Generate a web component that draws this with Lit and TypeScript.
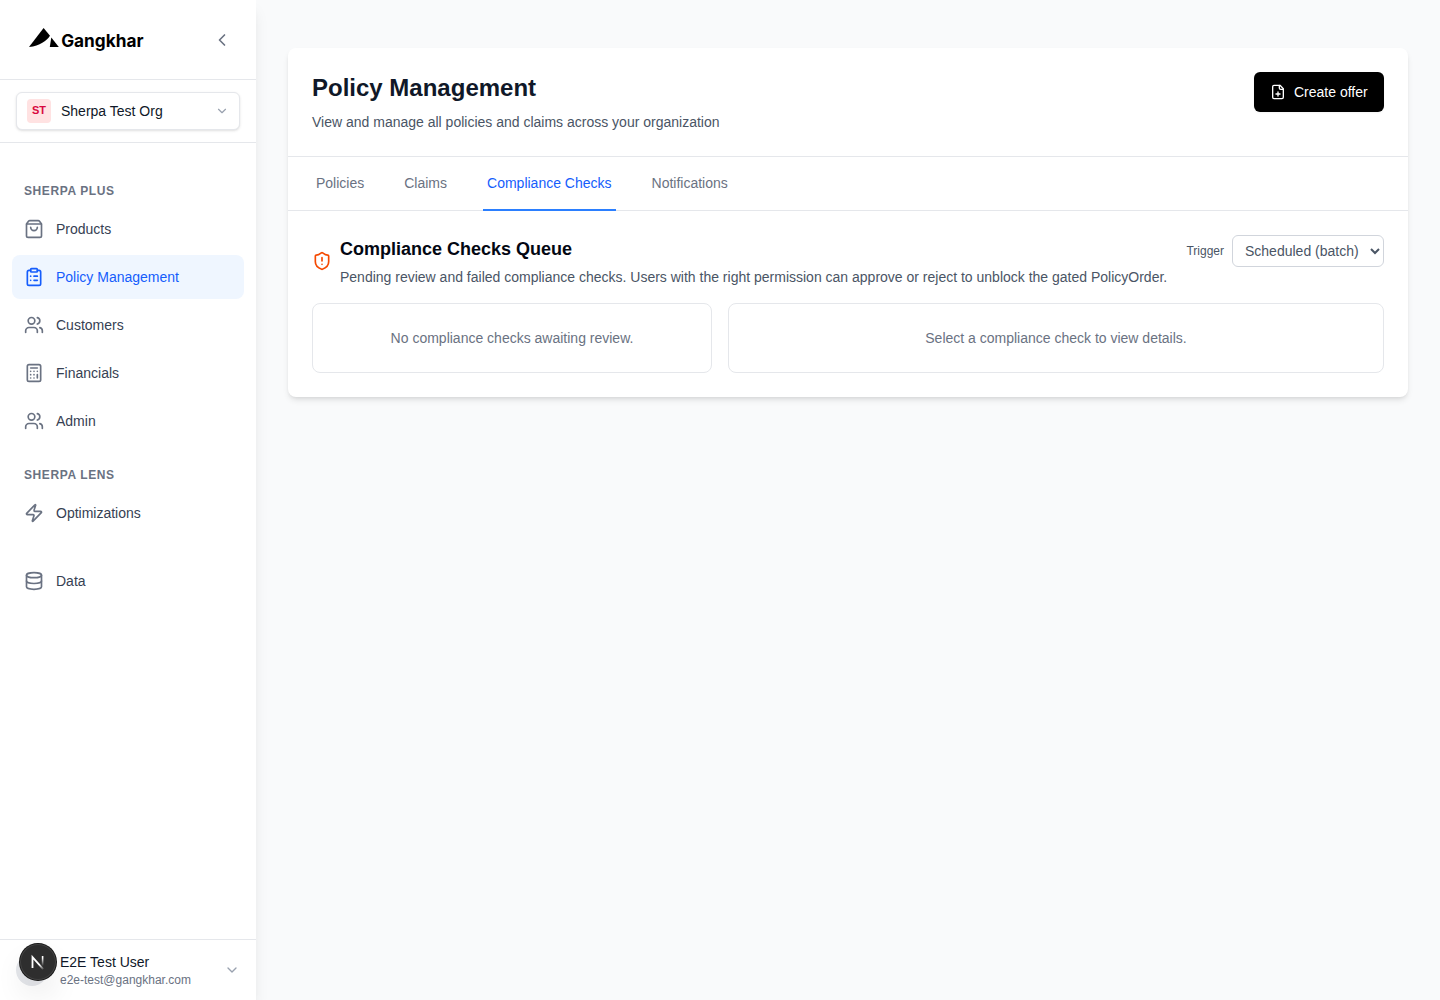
import { LitElement, html, css, svg } from "lit";
import { customElement } from "lit/decorators.js";
import { classMap } from "lit/directives/class-map.js";

const glyphs: Record<string, unknown> = {
  bag: svg`<path d="M16 10a4 4 0 0 1-8 0"/><path d="M3.103 6.034h17.794"/><path d="M3.4 5.467a2 2 0 0 0-.4 1.2V20a2 2 0 0 0 2 2h14a2 2 0 0 0 2-2V6.667a2 2 0 0 0-.4-1.2l-2-2.667A2 2 0 0 0 17 2H7a2 2 0 0 0-1.6.8z"/>`,
  clipboard: svg`<rect width="8" height="4" x="8" y="2" rx="1" ry="1"/><path d="M16 4h2a2 2 0 0 1 2 2v14a2 2 0 0 1-2 2H6a2 2 0 0 1-2-2V6a2 2 0 0 1 2-2h2"/><path d="M12 11h4"/><path d="M12 16h4"/><path d="M8 11h.01"/><path d="M8 16h.01"/>`,
  users: svg`<path d="M16 21v-2a4 4 0 0 0-4-4H6a4 4 0 0 0-4 4v2"/><path d="M16 3.128a4 4 0 0 1 0 7.744"/><path d="M22 21v-2a4 4 0 0 0-3-3.87"/><circle cx="9" cy="7" r="4"/>`,
  calculator: svg`<rect width="16" height="20" x="4" y="2" rx="2"/><path d="M8 6h8"/><path d="M16 14v4"/><path d="M16 10h.01"/><path d="M12 10h.01"/><path d="M8 10h.01"/><path d="M12 14h.01"/><path d="M8 14h.01"/><path d="M12 18h.01"/><path d="M8 18h.01"/>`,
  zap: svg`<path d="M4 14a1 1 0 0 1-.78-1.63l9.9-10.2a.5.5 0 0 1 .86.46l-1.92 6.02A1 1 0 0 0 13 10h7a1 1 0 0 1 .78 1.63l-9.9 10.2a.5.5 0 0 1-.86-.46l1.92-6.02A1 1 0 0 0 11 14z"/>`,
  database: svg`<ellipse cx="12" cy="5" rx="9" ry="3"/><path d="M3 5V19A9 3 0 0 0 21 19V5"/><path d="M3 12A9 3 0 0 0 21 12"/>`,
  left: svg`<path d="m15 18-6-6 6-6"/>`,
  down: svg`<path d="m6 9 6 6 6-6"/>`,
  filePlus: svg`<path d="M15 2H6a2 2 0 0 0-2 2v16a2 2 0 0 0 2 2h12a2 2 0 0 0 2-2V7Z"/><path d="M14 2v4a2 2 0 0 0 2 2h4"/><path d="M9 15h6"/><path d="M12 18v-6"/>`,
  shield: svg`<path d="M20 13c0 5-3.5 7.5-7.66 8.95a1 1 0 0 1-.67-.01C7.5 20.5 4 18 4 13V6a1 1 0 0 1 1-1c2 0 4.5-1.2 6.24-2.72a1.17 1.17 0 0 1 1.52 0C14.51 3.81 17 5 19 5a1 1 0 0 1 1 1z"/><path d="M12 8v4"/><path d="M12 16h.01"/>`,
};

const icon = (name: string, size: number, cls = "") => html`<svg
  class="icon ${cls}" width=${size} height=${size} viewBox="0 0 24 24" aria-hidden="true"
>${glyphs[name]}</svg>`;

const reset = css`
  *, *::before, *::after { box-sizing: border-box; }
  h1, h2, p { margin: 0; }
  button, select { font: inherit; }
  .icon {
    display: block; flex: none; fill: none; stroke: currentColor;
    stroke-width: 2; stroke-linecap: round; stroke-linejoin: round;
  }
`;

const sections = [
  {
    title: "Sherpa Plus",
    items: [
      ["bag", "Products"],
      ["clipboard", "Policy Management"],
      ["users", "Customers"],
      ["calculator", "Financials"],
      ["users", "Admin"],
    ],
  },
  { title: "Sherpa Lens", items: [["zap", "Optimizations"]] },
  { title: "", items: [["database", "Data"]] },
];

@customElement("app-sidebar")
export class AppSidebar extends LitElement {
  static styles = [reset, css`
    :host {
      display: flex; flex-direction: column; flex: none; width: 256px; height: 1000px;
      background: #fff; position: relative; z-index: 1;
      box-shadow: 0 10px 15px -3px rgb(0 0 0 / .1), 0 4px 6px -4px rgb(0 0 0 / .1);
    }
    .brand {
      height: 80px; flex: none; padding: 0 24px; display: flex; align-items: center;
      justify-content: space-between; border-bottom: 1px solid #e5e7eb;
    }
    .logo { display: block; }
    .wordmark { font: 700 17.5px Inter, sans-serif; fill: #000; }
    .collapse { display: flex; border: 0; background: none; padding: 0; color: #6a7282; }
    .org { padding: 12px 16px; border-bottom: 1px solid #e5e7eb; }
    .org-button {
      width: 100%; height: 38px; display: flex; align-items: center; gap: 10px;
      padding: 0 10px; border: 1px solid #e5e7eb; border-radius: 6px; background: #fff;
      box-shadow: 0 1px 3px rgb(0 0 0 / .1), 0 1px 2px -1px rgb(0 0 0 / .1);
      color: #101828; text-align: left;
    }
    .org-badge {
      width: 24px; height: 24px; border-radius: 4px; background: #ffe2e2; color: #d8083f;
      font-size: 11px; line-height: 23px; font-weight: 700; text-align: center;
    }
    .org-name { flex: 1; }
    .muted { color: #99a1af; }
    nav { flex: 1; padding: 40px 12px 0; display: flex; flex-direction: column; gap: 24px; }
    .heading {
      font-size: 12px; line-height: 16px; font-weight: 700; letter-spacing: .6px;
      text-transform: uppercase; color: #6a7282; padding: 0 12px; margin-bottom: 8px;
    }
    .items { display: flex; flex-direction: column; gap: 4px; }
    .item {
      height: 44px; padding: 0 12px; display: flex; align-items: center; gap: 12px;
      border-radius: 8px; color: #364153;
    }
    .item .icon { color: #6a7282; }
    .item.active, .item.active .icon { color: #155dfc; }
    .item.active { background: #eff6ff; }
    .user {
      border-top: 1px solid #e5e7eb; padding: 12px 16px; display: flex;
      align-items: center; gap: 12px; position: relative;
    }
    .avatar { width: 32px; height: 32px; border-radius: 50%; background: #e5e7eb; }
    .who { flex: 1; }
    .name { color: #101828; }
    .mail { font-size: 12px; line-height: 16px; color: #6a7282; }
    .dev-badge {
      position: absolute; left: 20px; top: 4px; width: 36px; height: 36px; border-radius: 50%;
      background: #2e2e2e; display: flex;
      box-shadow: 0 0 0 1px #171717, inset 0 0 0 1px rgb(255 255 255 / .1),
        0 16px 32px -8px rgb(0 0 0 / .24);
    }
  `];

  render() {
    return html`
      <div class="brand">
        <svg class="logo" width="124" height="32" viewBox="24 24 124 32" role="img" aria-label="Gangkhar">
          <path d="M43.6 28 50 35.7C46.5 41 40 45.6 29 47Z"/>
          <path d="M51.3 37.4 58.8 47H49.8Z"/>
          <text class="wordmark" x="61.2" y="47" textLength="82.3" lengthAdjust="spacingAndGlyphs">Gangkhar</text>
        </svg>
        <button class="collapse" aria-label="Collapse">${icon("left", 20)}</button>
      </div>
      <div class="org">
        <button class="org-button">
          <span class="org-badge">ST</span>
          <span class="org-name">Sherpa Test Org</span>
          ${icon("down", 14, "muted")}
        </button>
      </div>
      <nav>
        ${sections.map((s) => html`<div>
          ${s.title ? html`<div class="heading">${s.title}</div>` : ""}
          <div class="items">
            ${s.items.map(([glyph, label]) => html`
              <a class=${classMap({ item: true, active: label === "Policy Management" })}>
                ${icon(glyph, 20)}<span>${label}</span>
              </a>`)}
          </div>
        </div>`)}
      </nav>
      <div class="user">
        <span class="avatar"></span>
        <div class="who">
          <div class="name">E2E Test User</div>
          <div class="mail">e2e-test@gangkhar.com</div>
        </div>
        ${icon("down", 16, "muted")}
        <div class="dev-badge">
          <svg width="36" height="36" viewBox="0 0 36 36" fill="none" aria-hidden="true">
            <defs>
              <linearGradient id="diag" x1="18" y1="18" x2="24" y2="26" gradientUnits="userSpaceOnUse">
                <stop offset=".3" stop-color="#fff"/><stop offset="1" stop-color="#fff" stop-opacity="0"/>
              </linearGradient>
              <linearGradient id="stem" x1="22.6" y1="12" x2="22.6" y2="22" gradientUnits="userSpaceOnUse">
                <stop offset=".2" stop-color="#fff"/><stop offset="1" stop-color="#fff" stop-opacity="0"/>
              </linearGradient>
            </defs>
            <path d="M12.5 24V13.2L23.2 25.2" stroke="url(#diag)" stroke-width="1.8"/>
            <path d="M22.6 12v10" stroke="url(#stem)" stroke-width="1.6"/>
          </svg>
        </div>
      </div>`;
  }
}

@customElement("app-root")
export class AppRoot extends LitElement {
  static styles = [reset, css`
    :host {
      display: flex; height: 1000px; overflow: hidden; background: #f9fafb;
      font-family: "Liberation Sans", Arial, sans-serif; font-size: 14px; line-height: 20px;
    }
    main { flex: 1; padding: 48px 32px; }
    .card {
      background: #fff; border-radius: 8px;
      box-shadow: 0 4px 6px -1px rgb(0 0 0 / .1), 0 2px 4px -2px rgb(0 0 0 / .1);
    }
    .header {
      display: flex; justify-content: space-between; align-items: flex-start;
      padding: 24px; border-bottom: 1px solid #e5e7eb;
    }
    h1 { font-size: 24px; line-height: 32px; color: #101828; }
    .subtitle { margin-top: 8px; color: #4a5565; }
    .create {
      display: flex; align-items: center; gap: 8px; height: 40px; width: 130px; padding: 0 16px;
      border: 0; border-radius: 6px; background: #000; color: #fff; white-space: nowrap;
      box-shadow: 0 1px 2px rgb(0 0 0 / .05);
    }
    .tabs { display: flex; gap: 32px; padding: 0 24px; border-bottom: 1px solid #e5e7eb; }
    .tab {
      padding: 16px 4px; margin-bottom: -1px; border-bottom: 2px solid transparent; color: #6a7282;
    }
    .tab.active { color: #155dfc; border-color: #2b7fff; }
    .body { padding: 24px; }
    .queue { display: flex; align-items: flex-start; justify-content: space-between; }
    .queue-title { display: flex; align-items: center; gap: 8px; }
    .warn { color: #f54900; }
    h2 { font-size: 18px; line-height: 28px; color: #030712; }
    .desc { margin-top: 4px; color: #4a5565; }
    .trigger { display: flex; align-items: center; gap: 8px; font-size: 12px; color: #4a5565; }
    select {
      width: 152px; height: 32px; padding: 0 0 0 8px; font-size: 14px; line-height: 20px;
      color: #4a5565; background: #fff; border: 1px solid #d1d5dc; border-radius: 6px;
    }
    .panels { display: grid; grid-template-columns: 400px 1fr; gap: 16px; margin-top: 16px; }
    .panel {
      border: 1px solid #e5e7eb; border-radius: 8px; padding: 24px; text-align: center; color: #6a7282;
    }
  `];

  render() {
    return html`
      <app-sidebar></app-sidebar>
      <main>
        <section class="card">
          <div class="header">
            <div>
              <h1>Policy Management</h1>
              <p class="subtitle">View and manage all policies and claims across your organization</p>
            </div>
            <button class="create">${icon("filePlus", 16)}Create offer</button>
          </div>
          <div class="tabs">
            ${["Policies", "Claims", "Compliance Checks", "Notifications"].map((t) => html`
              <a class=${classMap({ tab: true, active: t === "Compliance Checks" })}>${t}</a>`)}
          </div>
          <div class="body">
            <div class="queue">
              <div class="queue-title">
                ${icon("shield", 20, "warn")}
                <div>
                  <h2>Compliance Checks Queue</h2>
                  <p class="desc">Pending review and failed compliance checks. Users with the right permission can approve or reject to unblock the gated PolicyOrder.</p>
                </div>
              </div>
              <label class="trigger">Trigger
                <select><option>Scheduled (batch)</option></select>
              </label>
            </div>
            <div class="panels">
              <div class="panel">No compliance checks awaiting review.</div>
              <div class="panel">Select a compliance check to view details.</div>
            </div>
          </div>
        </section>
      </main>`;
  }
}
